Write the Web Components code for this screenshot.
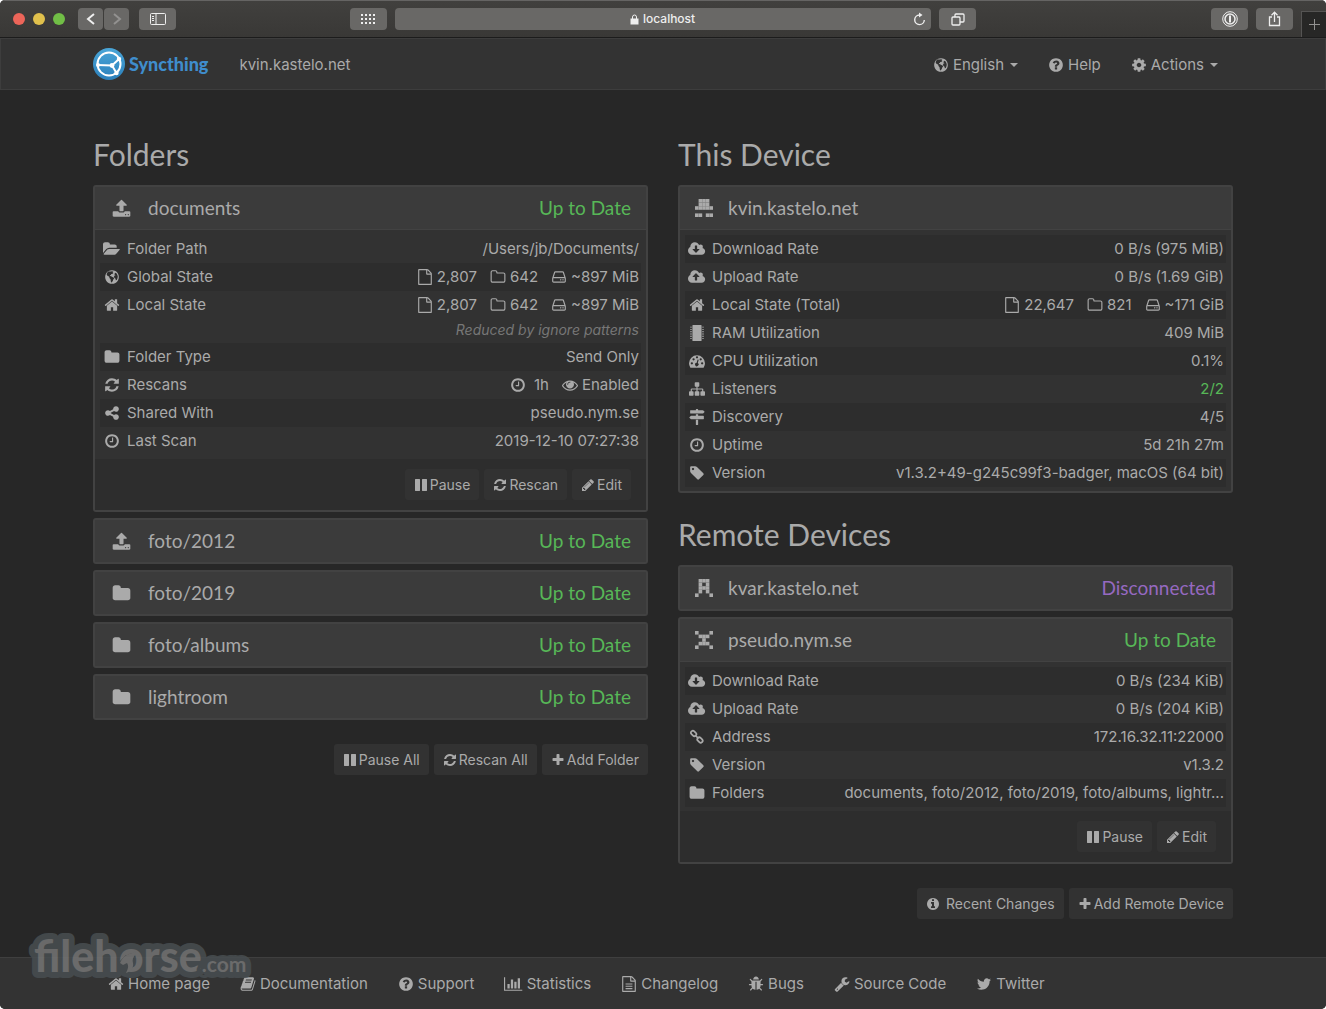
<!DOCTYPE html>
<html lang="en">
<head>
<meta charset="utf-8">
<title>kvin.kastelo.net | Syncthing</title>
<style>
html {
    background: #ffffff;
}

body {
    margin: 0;
    color: #aaaaaa;
    font: 15px/28px Inter, "Liberation Sans", sans-serif;
}
</style>
</head>
<body>
<st-window>
    <st-toolbar slot="chrome"></st-toolbar>
    <st-navbar slot="nav" device="kvin.kastelo.net"></st-navbar>

    <st-section heading="Folders" slot="left">
        <st-panel icon="upload" name="documents" status="Up to Date" open>
            <st-facts id="documents" stripe="even"></st-facts>
            <st-button slot="actions" icon="pause">Pause</st-button>
            <st-button slot="actions" icon="refresh">Rescan</st-button>
            <st-button slot="actions" icon="pencil">Edit</st-button>
        </st-panel>
        <st-panel icon="upload" name="foto/2012" status="Up to Date"></st-panel>
        <st-panel icon="folder" name="foto/2019" status="Up to Date"></st-panel>
        <st-panel icon="folder" name="foto/albums" status="Up to Date"></st-panel>
        <st-panel icon="folder" name="lightroom" status="Up to Date"></st-panel>
        <st-button slot="actions" icon="pause">Pause All</st-button>
        <st-button slot="actions" icon="refresh">Rescan All</st-button>
        <st-button slot="actions" icon="plus">Add Folder</st-button>
    </st-section>

    <st-section heading="This Device" slot="right">
        <st-panel identicon=".xxx. .xxx. xxxxx ..... xx.xx" name="kvin.kastelo.net" open>
            <st-facts id="this-device" stripe="odd"></st-facts>
        </st-panel>
    </st-section>
    <st-section heading="Remote Devices" slot="right">
        <st-panel identicon=".xxx. .x.x. .xxx. .x.x. x...x" name="kvar.kastelo.net" status="Disconnected"></st-panel>
        <st-panel identicon="x...x .xxx. ..x.. .xxx. x...x" name="pseudo.nym.se" status="Up to Date" open>
            <st-facts id="pseudo" stripe="odd"></st-facts>
            <st-button slot="actions" icon="pause">Pause</st-button>
            <st-button slot="actions" icon="pencil">Edit</st-button>
        </st-panel>
        <st-button slot="actions" icon="info" wide>Recent Changes</st-button>
        <st-button slot="actions" icon="plus">Add Remote Device</st-button>
    </st-section>

    <st-footer slot="footer"></st-footer>
    <st-watermark slot="footer"></st-watermark>
</st-window>

<script>
const DISC = "M1664 896q0 209-103 385.5t-279.5 279.5-385.5 103-385.5-103-279.5-279.5-103-385.5 103-385.5 279.5-279.5 385.5-103 385.5 103 279.5 279.5 103 385.5z";
const CLOUD = "M1920 1152q0 159-112.5 271.5t-271.5 112.5h-1088q-185 0-316.5-131.5t-131.5-316.5q0-132 71-241.5t187-163.5q-2-28-2-43 0-212 150-362t362-150q158 0 286.5 88t187.5 230q70-62 166-62 106 0 181 75t75 181q0 75-41 138 129 30 213 134.5t84 239.5z";
const FILE = "M1596 380q28 28 48 76t20 88v1152q0 40-28 68t-68 28h-1344q-40 0-68-28t-28-68v-1600q0-40 28-68t68-28h896q40 0 88 20t76 48zm-444-244v376h376q-10-29-22-41l-313-313q-12-12-41-22zm384 1528v-1024h-416q-40 0-68-28t-28-68v-416h-768v1536h1280z";

/**
 * Icon drawings: [view box width, path data]. Every view box is 1792 high.
 */
const ICONS = {
    "folder": [1792, "M1728 608v704q0 92-66 158t-158 66h-1216q-92 0-158-66t-66-158v-960q0-92 66-158t158-66h320q92 0 158 66t66 158v32h672q92 0 158 66t66 158z"],
    "folder-o": [1792, "M1600 1312v-704q0-40-28-68t-68-28h-704q-40 0-68-28t-28-68v-64q0-40-28-68t-68-28h-320q-40 0-68 28t-28 68v960q0 40 28 68t68 28h1216q40 0 68-28t28-68zm128-704v704q0 92-66 158t-158 66h-1216q-92 0-158-66t-66-158v-960q0-92 66-158t158-66h320q92 0 158 66t66 158v32h672q92 0 158 66t66 158z"],
    "folder-open": [1920, "M1879 952q0 31-31 66l-336 396q-43 51-120.5 86.5t-143.5 35.5h-1088q-34 0-60.5-13t-26.5-43q0-31 31-66l336-396q43-51 120.5-86.5t143.5-35.5h1088q34 0 60.5 13t26.5 43zm-343-344v160h-832q-94 0-197 47.5t-164 119.5l-337 396-5 6v-985q0-92 66-158t158-66h320q92 0 158 66t66 158v32h544q92 0 158 66t66 158z"],
    "file-o": [1792, FILE],
    "file-text": [1792, FILE + "M512 832h768v128h-768zM512 1088h768v128h-768zM512 1344h768v128h-768z"],
    "home": [1792, "M1472 992v480q0 26-19 45t-45 19h-384v-384h-256v384h-384q-26 0-45-19t-19-45v-480q0-1 .5-3t.5-3l575-474 575 474q1 2 1 6zm223-69l-62 74q-8 9-21 11h-3q-13 0-21-7l-692-577-692 577q-12 8-24 7-13-2-21-11l-62-74q-8-10-7-23.5t11-21.5l719-599q32-26 76-26t76 26l244 204v-195q0-14 9-23t23-9h192q14 0 23 9t9 23v408l219 182q10 8 11 21.5t-7 23.5z"],
    "clock": [1792, "M1024 544v448q0 14-9 23t-23 9h-320q-14 0-23-9t-9-23v-64q0-14 9-23t23-9h224v-352q0-14 9-23t23-9h64q14 0 23 9t9 23zm416 352q0-148-73-273t-198-198-273-73-273 73-198 198-73 273 73 273 198 198 273 73 273-73 198-198 73-273z" + DISC],
    "refresh": [1792, "M1639 1056q0 5-1 7-64 268-268 434.5t-478 166.5q-146 0-282.5-55t-243.5-157l-129 129q-19 19-45 19t-45-19-19-45v-448q0-26 19-45t45-19h448q26 0 45 19t19 45-19 45l-137 137q71 66 161 102t187 36q134 0 250-65t186-179q11-17 53-117 8-23 30-23h192q13 0 22.5 9.5t9.5 22.5zm25-800v448q0 26-19 45t-45 19h-448q-26 0-45-19t-19-45 19-45l138-138q-148-137-349-137-134 0-250 65t-186 179q-11 17-53 117-8 23-30 23h-199q-13 0-22.5-9.5t-9.5-22.5v-7q65-268 270-434.5t480-166.5q146 0 284 55.5t245 156.5l130-129q19-19 45-19t45 19 19 45z"],
    "share": [1792, "M1344 1024q133 0 226.5 93.5t93.5 226.5-93.5 226.5-226.5 93.5-226.5-93.5-93.5-226.5q0-12 2-34l-360-180q-92 86-218 86-133 0-226.5-93.5t-93.5-226.5 93.5-226.5 226.5-93.5q126 0 218 86l360-180q-2-22-2-34 0-133 93.5-226.5t226.5-93.5 226.5 93.5 93.5 226.5-93.5 226.5-226.5 93.5q-126 0-218-86l-360 180q2 22 2 34t-2 34l360 180q92-86 218-86z"],
    "eye": [1792, "M1664 960q-152-236-381-353 61 104 61 225 0 185-131.5 316.5t-316.5 131.5-316.5-131.5-131.5-316.5q0-121 61-225-229 117-381 353 133 205 333.5 326.5t434.5 121.5 434.5-121.5 333.5-326.5zm-720-384q0-20-14-34t-34-14q-125 0-214.5 89.5t-89.5 214.5q0 20 14 34t34 14 34-14 14-34q0-86 61-147t147-61q20 0 34-14t14-34zm848 384q0 34-20 69-140 230-376.5 368.5t-499.5 138.5-499.5-139-376.5-368q-20-35-20-69t20-69q140-229 376.5-368t499.5-139 499.5 139 376.5 368q20 35 20 69z"],
    "pause": [1792, "M1664 192v1408q0 26-19 45t-45 19h-512q-26 0-45-19t-19-45v-1408q0-26 19-45t45-19h512q26 0 45 19t19 45zm-896 0v1408q0 26-19 45t-45 19h-512q-26 0-45-19t-19-45v-1408q0-26 19-45t45-19h512q26 0 45 19t19 45z"],
    "pencil": [1792, "M491 1536l91-91-235-235-91 91v107h128v128h107zm523-928q0-22-22-22-10 0-17 7l-542 542q-7 7-7 17 0 22 22 22 10 0 17-7l542-542q7-7 7-17zm-54-192l416 416-832 832h-416v-416zm683 96q0 53-37 90l-166 166-416-416 166-165q36-38 90-38 53 0 91 38l235 234q37 39 37 91z"],
    "plus": [1792, "M1600 736v192q0 40-28 68t-68 28h-416v416q0 40-28 68t-68 28h-192q-40 0-68-28t-28-68v-416h-416q-40 0-68-28t-28-68v-192q0-40 28-68t68-28h416v-416q0-40 28-68t68-28h192q40 0 68 28t28 68v416h416q40 0 68 28t28 68z"],
    "info": [1792, "M1152 1376v-160q0-14-9-23t-23-9h-96v-512q0-14-9-23t-23-9h-320q-14 0-23 9t-9 23v160q0 14 9 23t23 9h96v320h-96q-14 0-23 9t-9 23v160q0 14 9 23t23 9h448q14 0 23-9t9-23zm-128-896v-160q0-14-9-23t-23-9h-192q-14 0-23 9t-9 23v160q0 14 9 23t23 9h192q14 0 23-9t9-23z" + DISC],
    "question": [1792, "M1024 1376v-192q0-14-9-23t-23-9h-192q-14 0-23 9t-9 23v192q0 14 9 23t23 9h192q14 0 23-9t9-23zm256-672q0-88-55.5-163t-138.5-116-170-41q-243 0-371 213-15 24 8 42l132 100q7 6 19 6 16 0 25-12 53-68 86-92 34-24 86-24 48 0 85.5 26t37.5 59q0 38-20 61t-68 45q-63 28-115.5 86.5t-52.5 125.5v36q0 14 9 23t23 9h192q14 0 23-9t9-23q0-19 21.5-49.5t54.5-49.5q32-18 49-28.5t46-35 44.5-48 28-60.5 12.5-81z" + DISC],
    "cog": [1792, "M1152 896q0-106-75-181t-181-75-181 75-75 181 75 181 181 75 181-75 75-181zm512-109v222q0 12-8 23t-20 13l-185 28q-19 54-39 91 35 50 107 138 10 12 10 25t-9 23q-27 37-99 108t-94 71q-12 0-26-9l-138-108q-44 23-91 38-16 136-29 186-7 28-36 28h-222q-14 0-24.5-8.5t-11.5-21.5l-28-184q-49-16-90-37l-141 107q-10 9-25 9-14 0-25-11-126-114-165-168-7-10-7-23 0-12 8-23 15-21 51-66.5t54-70.5q-27-50-41-99l-183-27q-13-2-21-12.5t-8-23.5v-222q0-12 8-23t19-13l186-28q14-46 39-92-40-57-107-138-10-12-10-24 0-10 9-23 26-36 98.5-107.5t94.5-71.5q13 0 26 10l138 107q44-23 91-38 16-136 29-186 7-28 36-28h222q14 0 24.5 8.5t11.5 21.5l28 184q49 16 90 37l142-107q9-9 24-9 13 0 25 10 129 119 165 170 7 8 7 22 0 12-8 23-15 21-51 66.5t-54 70.5q26 50 41 98l183 28q13 2 21 12.5t8 23.5z"],
    "tag": [1792, "M576 448q0-53-37.5-90.5t-90.5-37.5-90.5 37.5-37.5 90.5 37.5 90.5 90.5 37.5 90.5-37.5 37.5-90.5zm1067 576q0 53-37 90l-491 492q-39 37-91 37-53 0-90-37l-715-716q-38-37-64.5-101t-26.5-117v-416q0-52 38-90t90-38h416q53 0 117 26.5t102 64.5l715 714q37 39 37 91z"],
    "sitemap": [1792, "M1792 1248v320q0 40-28 68t-68 28h-320q-40 0-68-28t-28-68v-320q0-40 28-68t68-28h96v-192h-512v192h96q40 0 68 28t28 68v320q0 40-28 68t-68 28h-320q-40 0-68-28t-28-68v-320q0-40 28-68t68-28h96v-192h-512v192h96q40 0 68 28t28 68v320q0 40-28 68t-68 28h-320q-40 0-68-28t-28-68v-320q0-40 28-68t68-28h96v-192q0-52 38-90t90-38h512v-192h-96q-40 0-68-28t-28-68v-320q0-40 28-68t68-28h320q40 0 68 28t28 68v320q0 40-28 68t-68 28h-96v192h512q52 0 90 38t38 90v192h96q40 0 68 28t28 68z"],
    "cloud-down": [1920, CLOUD + "M1280 928q0-14-9-23t-23-9h-224v-352q0-13-9.5-22.5t-22.5-9.5h-192q-13 0-22.5 9.5t-9.5 22.5v352h-224q-13 0-22.5 9.5t-9.5 22.5q0 14 9 23l352 352q9 9 23 9t23-9l351-351q10-12 10-24z"],
    "cloud-up": [1920, CLOUD + "M1280 864q0 14-9 23t-23 9h-224v352q0 13-9.5 22.5t-22.5 9.5h-192q-13 0-22.5-9.5t-9.5-22.5v-352h-224q-13 0-22.5-9.5t-9.5-22.5q0-14 9-23l352-352q9-9 23-9t23 9l351 351q10 12 10 24z"],
    "twitter": [1792, "M1684 408q-67 98-162 167 1 14 1 42 0 130-38 259.5t-115.5 248.5-184.5 210.5-258 146-323 54.5q-271 0-496-145 35 4 78 4 225 0 401-138-105-2-188-64.5t-114-159.5q33 5 61 5 43 0 85-11-112-23-185.5-111.5t-73.5-205.5v-4q68 38 146 41-66-44-105-115t-39-154q0-88 44-163 121 149 294.5 238.5t371.5 99.5q-8-38-8-74 0-134 94.5-228.5t228.5-94.5q140 0 236 102 109-21 205-78-37 115-142 178 93-10 186-50z"],
    "wrench": [1792, "M448 1472q0-26-19-45t-45-19-45 19-19 45 19 45 45 19 45-19 19-45zm644-420l-682 682q-37 37-90 37-52 0-91-37l-106-108q-38-36-38-90 0-53 38-91l681-681q39 98 114.5 173.5t173.5 114.5zm634-435q0 39-23 106-47 134-164.5 217.5t-258.5 83.5q-185 0-316.5-131.5t-131.5-316.5 131.5-316.5 316.5-131.5q58 0 121.5 16.5t107.5 46.5q16 11 16 28t-16 28l-293 169v224l193 107q5-3 79-48.5t135.5-81 70.5-35.5q15 0 23.5 10t8.5 25z"],
    "chart": [2048, "M640 896v512H384V896zM1024 384v1024H768V384zM2048 1536v128H0V128h128v1408zM1408 640v768h-256V640zM1792 256v1152h-256V256z"],
    "book": [1792, "M1703 478q40 57 18 129l-275 906q-19 64-76.5 107.5t-122.5 43.5h-923q-77 0-148.5-53.5t-99.5-131.5q-24-67-2-127 0-4 3-27t4-37q1-8-3-21.5t-3-19.5q2-11 8-21t16.5-23.5 16.5-23.5q23-38 45-91.5t30-91.5q3-10 .5-30t-.5-28q3-11 17-28t17-23q21-36 42-92t25-90q1-9-2.5-32t.5-28q4-13 22-30.5t22-22.5q19-26 42.5-84.5t27.5-96.5q1-8-3-25.5t-2-26.5q2-8 9-18t18-23 17-21q8-12 16.5-30.5t15-35 16-36 19.5-32 26.5-23.5 36-11.5 47.5 5.5l-1 3q38-9 51-9h761q74 0 114 56t18 130l-274 906q-36 119-71.5 153.5t-128.5 34.5h-869q-27 0-38 15-11 16-1 43 24 70 144 70h923q29 0 56-15.5t35-41.5l300-987q7-22 5-57 38 15 59 43zm-1064 2q-4 13 2 22.5t20 9.5h608q13 0 25.5-9.5t16.5-22.5l21-64q4-13-2-22.5t-20-9.5h-608q-13 0-25.5 9.5t-16.5 22.5zm-83 256q-4 13 2 22.5t20 9.5h608q13 0 25.5-9.5t16.5-22.5l21-64q4-13-2-22.5t-20-9.5h-608q-13 0-25.5 9.5t-16.5 22.5z"],
    "bug": [1792, "M1696 960q0 26-19 45t-45 19h-224q0 171-67 290l208 209q19 19 19 45t-19 45q-18 19-45 19t-45-19l-198-197q-5 5-15 13t-42 28.5-65 36.5-82 29-97 13v-896h-128v896q-51 0-101.5-13.5t-87-33-66-39-43.5-32.5l-15-14-183 207q-20 21-48 21-24 0-43-16-19-18-20.5-44.5t15.5-46.5l202-227q-58-114-58-274h-224q-26 0-45-19t-19-45 19-45 45-19h224v-294l-173-173q-19-19-19-45t19-45 45-19 45 19l173 173h844l173-173q19-19 45-19t45 19 19 45-19 45l-173 173v294h224q26 0 45 19t19 45zm-480-576h-640q0-133 93.5-226.5t226.5-93.5 226.5 93.5 93.5 226.5z"],
    "signs": [1792, "M1745 297q10 10 10 23t-10 23l-141 141q-28 28-68 28h-1344q-26 0-45-19t-19-45v-256q0-26 19-45t45-19h576v-64q0-26 19-45t45-19h128q26 0 45 19t19 45v64h512q40 0 68 28zm-977 919h256v512q0 26-19 45t-45 19h-128q-26 0-45-19t-19-45v-512zm832-448q26 0 45 19t19 45v256q0 26-19 45t-45 19h-1344q-40 0-68-28l-141-141q-10-10-10-23t10-23l141-141q28-28 68-28h512v-192h256v192h576z"],
    "disk": [1792, "M1168 1216q0 33-23.5 56.5t-56.5 23.5-56.5-23.5-23.5-56.5 23.5-56.5 56.5-23.5 56.5 23.5 23.5 56.5zm256 0q0 33-23.5 56.5t-56.5 23.5-56.5-23.5-23.5-56.5 23.5-56.5 56.5-23.5 56.5 23.5 23.5 56.5zm112 160v-320q0-13-9.5-22.5t-22.5-9.5h-1216q-13 0-22.5 9.5t-9.5 22.5v320q0 13 9.5 22.5t22.5 9.5h1216q13 0 22.5-9.5t9.5-22.5zm-1230-480h1180l-157-482q-4-13-16-21.5t-26-8.5h-782q-14 0-26 8.5t-16 21.5zm1358 160v320q0 66-47 113t-113 47h-1216q-66 0-113-47t-47-113v-320q0-25 16-75l197-606q17-53 63-86t101-33h782q55 0 101 33t63 86l197 606q16 50 16 75z"],
    "upload": [1792, "M1344 1472q0-26-19-45t-45-19-45 19-19 45 19 45 45 19 45-19 19-45zm256 0q0-26-19-45t-45-19-45 19-19 45 19 45 45 19 45-19 19-45zm128-224v320q0 40-28 68t-68 28h-1472q-40 0-68-28t-28-68v-320q0-40 28-68t68-28h427q21 56 70.5 92t110.5 36h256q61 0 110.5-36t70.5-92h427q40 0 68 28t28 68zm-325-648q-17 40-59 40h-256v448q0 26-19 45t-45 19h-256q-26 0-45-19t-19-45v-448h-256q-42 0-59-40-17-39 14-69l448-448q18-19 45-19t45 19l448 448q31 30 14 69z"],
    "chip": [1792, "M448 0h896q64 0 64 64v1664q0 64-64 64h-896q-64 0-64-64v-1664q0-64 64-64zM128 192h192v96h-192zM128 448h192v96h-192zM128 704h192v96h-192zM128 960h192v96h-192zM128 1216h192v96h-192zM128 1472h192v96h-192zM1472 192h192v96h-192zM1472 448h192v96h-192zM1472 704h192v96h-192zM1472 960h192v96h-192zM1472 1216h192v96h-192zM1472 1472h192v96h-192z"],
    "gauge": [1792, "M0 1152a896 896 0 0 1 1792 0q0 261-141 483-19 29-54 29h-1402q-35 0-54-29-141-221-141-483zM192 1152a128 128 0 1 0 256 0 128 128 0 1 0-256 0zM384 704a128 128 0 1 0 256 0 128 128 0 1 0-256 0zM768 480a128 128 0 1 0 256 0 128 128 0 1 0-256 0zM1184 704a128 128 0 1 0 256 0 128 128 0 1 0-256 0zM1344 1152a128 128 0 1 0 256 0 128 128 0 1 0-256 0zM962 718l124 32-101 382a192 192 0 1 1-124-32z"],
    "globe": [1792, DISC + "M760 270l140-20 150 50-90 70 90 70-130 110-110 20-40 90-110 40 20 90 130 10 60 80 200 60 60 130-110 130-30 150-120 130-80 20-30-170-30-190-120-130-20-130-140-100-100-40-50-130 60-180 110-160zM1240 420l150 60 110 180 40 190-20 170-90 200-110 40-20-180-130-70-50-150 60-130 110-40-70-60-60-20z"],
    "link": [1792, ""]
};

/**
 * Returns a template element holding the given markup.
 *
 * @param {string} markup
 * @returns {HTMLTemplateElement}
 */
function template(markup) {
    const element = document.createElement("template");
    element.innerHTML = markup;
    return element;
}

/**
 * Base class: opens a shadow root and fills it from the class's template.
 */
class STElement extends HTMLElement {
    constructor() {
        super();
        this._shadowRoot = this.attachShadow({ mode: "open" });
        this._shadowRoot.appendChild(this.constructor.template.content.cloneNode(true));
    }

    /**
     * @param {string} id
     * @returns {HTMLElement}
     */
    part$(id) {
        return this._shadowRoot.getElementById(id);
    }
}

class STIcon extends STElement {
    static template = template(
`
<style>
:host {
    display: inline-flex;
    flex: none;
    justify-content: center;
    align-items: center;
}

svg {
    display: block;
    height: 1em;
    fill: currentColor;
    fill-rule: evenodd;
}
</style>
<svg id="drawing" aria-hidden="true"></svg>
`);

    connectedCallback() {
        const name = this.getAttribute("name");
        const [width, path] = ICONS[name];
        const drawing = this.part$("drawing");
        drawing.setAttribute("viewBox", `0 0 ${width} 1792`);
        if (name === "link") {
            drawing.innerHTML = `<g fill="none" stroke="currentColor" stroke-width="190"><rect x="-330" y="-220" width="660" height="440" rx="210" transform="translate(520 500) rotate(45)"/><rect x="-330" y="-220" width="660" height="440" rx="210" transform="translate(1230 1240) rotate(45)"/><path d="M700 700l350 350"/></g>`;
        } else {
            drawing.innerHTML = `<path d="${path}"/>`;
        }
    }
}

class STButton extends STElement {
    static template = template(
`
<style>
:host {
    display: block;
}

button {
    display: flex;
    align-items: center;
    gap: 2px;
    height: 31px;
    padding: 0 9px;
    border: 0;
    border-radius: 3px;
    background: #323232;
    color: inherit;
    font: 14px/20px Inter, "Liberation Sans", sans-serif;
    white-space: nowrap;
    cursor: pointer;
}

:host([wide]) button {
    gap: 6px;
}
</style>
<button type="button"><span id="icon"></span><span><slot></slot></span></button>
`);

    connectedCallback() {
        const icon = document.createElement("st-icon");
        icon.setAttribute("name", this.getAttribute("icon"));
        this.part$("icon").replaceWith(icon);
    }
}

class STWindow extends STElement {
    static template = template(
`
<style>
:host {
    display: flex;
    flex-direction: column;
    position: relative;
    min-height: 100vh;
    box-sizing: border-box;
    border-radius: 5px;
    background: #272727;
    overflow: hidden;
}

main {
    display: grid;
    grid-template-columns: 1fr 1fr;
    align-items: start;
    gap: 30px;
    width: 100%;
    max-width: 1140px;
    margin: 0 auto;
    padding: 23px 0 36px;
}

main > div {
    min-width: 0;
}

footer {
    margin-top: auto;
}
</style>
<slot name="chrome"></slot>
<slot name="nav"></slot>
<main>
    <div><slot name="left"></slot></div>
    <div><slot name="right"></slot></div>
</main>
<footer><slot name="footer"></slot></footer>
`);
}

class STToolbar extends STElement {
    static template = template(
`
<style>
:host {
    display: grid;
    grid-template-columns: 1fr minmax(0, 626px) 1fr;
    align-items: center;
    height: 38px;
    box-sizing: border-box;
    border-top: 1px solid #656463;
    border-bottom: 1px solid #1c1c1c;
    background: linear-gradient(#41403e, #393836);
    color: #eeeeee;
}

.group {
    display: flex;
    align-items: center;
    gap: 8px;
}

.lights {
    display: flex;
    gap: 8px;
    margin: 0 5px 0 13px;
}

.lights i {
    width: 12px;
    height: 12px;
    border-radius: 50%;
}

.pair {
    display: flex;
    gap: 1px;
    margin-right: 2px;
}

button,
.address {
    display: flex;
    justify-content: center;
    align-items: center;
    width: 37px;
    height: 22px;
    box-sizing: border-box;
    padding: 0;
    border: 0;
    border-radius: 4px;
    background: #696866;
    color: inherit;
}

.pair button {
    width: 25px;
}

.address {
    flex: 1;
    gap: 4px;
    padding: 0 5px 0 24px;
}

.address input {
    width: 54px;
    padding: 0;
    border: 0;
    background: none;
    color: inherit;
    font: 500 12px/16px Inter, "Liberation Sans", sans-serif;
}

.address .lock {
    margin-left: auto;
}

.address button {
    width: 14px;
    margin-left: auto;
    background: none;
}

.right {
    justify-content: flex-end;
    align-self: stretch;
}

.right .tab {
    align-self: flex-end;
    width: 25px;
    height: 26px;
    border: 1px solid #555453;
    border-width: 1px 0 0 1px;
    border-radius: 0;
    background: #272726;
}

svg {
    fill: none;
    stroke: currentColor;
}

.dim {
    stroke: #929190;
}
</style>
<div class="group">
    <div class="lights">
        <i style="background: #ec6559"></i>
        <i style="background: #e0c04c"></i>
        <i style="background: #71be46"></i>
    </div>
    <div class="pair">
        <button type="button" aria-label="Back"><svg width="12" height="14" stroke-width="2"><path d="M9 2L3 7l6 5"/></svg></button>
        <button type="button" aria-label="Forward"><svg class="dim" width="12" height="14" stroke-width="2"><path d="M3 2l6 5-6 5"/></svg></button>
    </div>
    <button type="button" aria-label="Show sidebar"><svg width="16" height="12"><rect x=".5" y=".5" width="15" height="11" rx="1"/><path d="M6 1v10M2 3.5h2M2 5.5h2M2 7.5h2"/></svg></button>
</div>
<div class="group">
    <button type="button" aria-label="Favourites"><svg width="15" height="11" stroke-width="2" stroke-dasharray="2 2"><path d="M0 1h15M0 5h15M0 9h15"/></svg></button>
    <div class="address">
        <svg class="lock" width="9" height="11"><rect x="1" y="5" width="7" height="5" fill="currentColor"/><path d="M2.500 5V3a2 2 0 0 1 4 0v2"/></svg>
        <input type="text" value="localhost" aria-label="Address">
        <button type="button" aria-label="Reload"><svg width="13" height="14" stroke-width="1.4"><path d="M8 3H6.500a4.800 4.800 0 1 0 4.800 5"/><path d="M6 .5L9.500 3 6 5.500z" fill="currentColor" stroke="none"/></svg></button>
    </div>
    <button type="button" aria-label="Show tabs"><svg width="14" height="13" stroke-width="1.3"><rect x="1" y="4" width="8" height="8" rx="1"/><path d="M4 4V2q0-1 1-1h7q1 0 1 1v6q0 1-1 1H9"/></svg></button>
</div>
<div class="group right">
    <button type="button" aria-label="Passwords"><svg width="16" height="16"><circle cx="8" cy="8" r="7.3"/><circle cx="8" cy="8" r="5" stroke-width="1.5"/><path d="M8 4.500v7" stroke-width="2"/></svg></button>
    <button type="button" aria-label="Share"><svg width="13" height="16" stroke-width="1.3"><path d="M4 6H1.500v8.500h10V6H9M6.500 11V1.500M3.500 4.200l3-3 3 3"/></svg></button>
    <button type="button" class="tab" aria-label="New tab"><svg class="dim" width="11" height="11"><path d="M5.500 0v11M0 5.500h11"/></svg></button>
</div>
`);
}

class STNavbar extends STElement {
    static template = template(
`
<style>
:host {
    display: block;
    border: 1px solid #3d3d3d;
    background: #333333;
}

nav {
    display: flex;
    align-items: center;
    max-width: 1140px;
    height: 50px;
    margin: 0 auto;
}

.brand {
    display: flex;
    align-items: center;
    gap: 4px;
    color: #3f8dcc;
    font: 900 18px/28px Lato, sans-serif;
    text-decoration: none;
}

#device {
    margin: 0 auto 0 31px;
    padding-top: 2px;
}

.menu {
    display: flex;
    align-items: center;
    gap: 4px;
    padding: 2px 15px 0;
    border: 0;
    background: none;
    color: inherit;
    font: inherit;
    text-decoration: none;
}

.menu st-icon {
    font-size: 16px;
}

.caret {
    margin-left: 2px;
    border: 4px solid transparent;
    border-top-color: currentColor;
    border-bottom: 0;
}
</style>
<nav>
    <a class="brand" href="#">
        <svg width="32" height="32" viewBox="0 0 32 32" aria-hidden="true">
            <linearGradient id="blue" x2="0" y2="1"><stop stop-color="#4aa6d8"/><stop offset="1" stop-color="#2c80bb"/></linearGradient>
            <circle cx="16" cy="16" r="16" fill="url(#blue)"/>
            <g fill="none" stroke="#ffffff" stroke-width="2">
                <circle cx="16" cy="16" r="11.5"/>
                <path d="M4.500 17l14.500.5 7-6.500M19 17.500l4.500 7.500"/>
            </g>
            <g fill="#ffffff"><circle cx="19" cy="17.500" r="2.400"/><circle cx="26" cy="11" r="2.200"/><circle cx="5" cy="17" r="2"/><circle cx="23.500" cy="25" r="2.200"/></g>
        </svg>
        <span>Syncthing</span>
    </a>
    <span id="device"></span>
    <button class="menu" type="button"><st-icon name="globe"></st-icon>English <i class="caret"></i></button>
    <a class="menu" href="#"><st-icon name="question"></st-icon>Help</a>
    <button class="menu" type="button"><st-icon name="cog"></st-icon>Actions <i class="caret"></i></button>
</nav>
`);

    connectedCallback() {
        this.part$("device").textContent = this.getAttribute("device");
    }
}

class STSection extends STElement {
    static template = template(
`
<style>
:host {
    display: block;
}

h2 {
    margin: 25px 0 15px;
    font: 400 30px/32px Lato, sans-serif;
}

.panels {
    display: flex;
    flex-direction: column;
    gap: 6px;
}

.actions {
    display: flex;
    justify-content: flex-end;
    gap: 5px;
    margin-top: 24px;
}

.actions[hidden] {
    display: none;
}
</style>
<h2 id="heading"></h2>
<div class="panels"><slot></slot></div>
<div class="actions" id="actions"><slot name="actions"></slot></div>
`);

    connectedCallback() {
        this.part$("heading").textContent = this.getAttribute("heading");
        this.part$("actions").hidden = !this.querySelector(":scope > [slot=actions]");
    }
}

class STPanel extends STElement {
    static template = template(
`
<style>
:host {
    display: block;
    border: 2px solid #424242;
    border-radius: 3px;
    background: #323232;
}

.heading {
    display: flex;
    align-items: center;
    width: 100%;
    height: 42px;
    padding: 0 15px;
    border: 0;
    background: #3b3b3b;
    color: inherit;
    font: 400 19px/24px Lato, sans-serif;
    text-align: left;
    cursor: pointer;
}

.heading st-icon {
    width: 22px;
    margin-right: 16px;
}

.heading svg {
    margin-right: 15px;
    fill: currentColor;
}

#status {
    margin-left: auto;
    color: #57b757;
}

#status.disconnected {
    color: #9669c0;
}

.body {
    padding: 5px 5px 4px;
    border-top: 1px solid #424242;
}

.actions {
    display: flex;
    justify-content: flex-end;
    gap: 5px;
    padding: 10px 15px;
    background: #2d2d2d;
}

[hidden] {
    display: none;
}
</style>
<button class="heading" type="button"><span id="icon"></span><span id="name"></span><span id="status"></span></button>
<div class="body" id="body"><slot></slot></div>
<div class="actions" id="actions"><slot name="actions"></slot></div>
`);

    connectedCallback() {
        const status = this.getAttribute("status") || "";
        this.part$("icon").outerHTML = this.hasAttribute("identicon")
            ? this.identicon()
            : `<st-icon name="${this.getAttribute("icon")}"></st-icon>`;
        this.part$("name").textContent = this.getAttribute("name");
        this.part$("status").textContent = status;
        this.part$("status").classList.toggle("disconnected", status === "Disconnected");
        this.part$("body").hidden = !this.hasAttribute("open");
        this.part$("actions").hidden = !this.querySelector("[slot=actions]");
    }

    /**
     * Draws the 5 by 5 device picture; each "x" is a filled cell.
     *
     * @returns {string}
     */
    identicon() {
        const cells = this.getAttribute("identicon").split(" ").flatMap((row, y) =>
            [...row].map((cell, x) => cell === "x" ? `<rect x="${x * 10}" y="${y * 10}" width="10" height="10"/>` : ""));
        return `<svg width="18" height="18" viewBox="0 0 50 50" aria-hidden="true">${cells.join("")}</svg>`;
    }
}

/**
 * @typedef {Object} Fact
 * @property {string} icon - Icon before the label.
 * @property {string} label - Row label.
 * @property {Array<string|string[]>} values - Plain texts, or [icon, text] pairs.
 * @property {string} [note] - Small remark under the values.
 * @property {boolean} [good] - Draw the value in green.
 */

class STFacts extends STElement {
    static template = template(
`
<style>
:host {
    display: block;
}

table {
    width: 100%;
    border-collapse: collapse;
    white-space: nowrap;
}

th,
td {
    height: 28px;
    padding: 0 2px;
    font-weight: 400;
    vertical-align: top;
}

th > span,
.values,
.value {
    display: flex;
    align-items: center;
}

th > span {
    gap: 5px;
}

th st-icon {
    width: 20px;
}

st-icon {
    font-size: 16px;
}

.values {
    justify-content: flex-end;
    gap: 13px;
}

.value {
    gap: 4px;
}

.good {
    color: #57b757;
}

.note {
    height: 24px;
    color: #777777;
    font: italic 14px/22px Inter, "Liberation Sans", sans-serif;
    text-align: right;
}

:host([stripe="odd"]) tr:nth-child(odd),
:host([stripe="even"]) tr:nth-child(even) {
    background: #2d2d2d;
}
</style>
<table><tbody id="rows"></tbody></table>
`);

    /**
     * @param {Fact[]} facts
     */
    set facts(facts) {
        this.part$("rows").innerHTML = facts.map(fact =>
`<tr>
    <th scope="row"><span><st-icon name="${fact.icon}"></st-icon>${fact.label}</span></th>
    <td>
        <div class="values ${fact.good ? "good" : ""}">${fact.values.map(value => this.value(value)).join("")}</div>
        ${fact.note ? `<div class="note">${fact.note}</div>` : ""}
    </td>
</tr>`).join("");
    }

    value(value) {
        if (typeof value === "string") {
            return `<span>${value}</span>`;
        }
        return `<span class="value"><st-icon name="${value[0]}"></st-icon>${value[1]}</span>`;
    }
}

class STFooter extends STElement {
    static template = template(
`
<style>
:host {
    display: block;
    border-top: 1px solid #3f3f3f;
    background: #333333;
}

nav {
    display: flex;
    align-items: center;
    gap: 30px;
    max-width: 1110px;
    height: 51px;
    margin: 0 auto;
}

a {
    display: flex;
    align-items: center;
    gap: 4px;
    color: inherit;
    text-decoration: none;
}

st-icon {
    font-size: 16px;
}
</style>
<nav>
    <a href="#"><st-icon name="home"></st-icon>Home page</a>
    <a href="#"><st-icon name="book"></st-icon>Documentation</a>
    <a href="#"><st-icon name="question"></st-icon>Support</a>
    <a href="#"><st-icon name="chart"></st-icon>Statistics</a>
    <a href="#"><st-icon name="file-text"></st-icon>Changelog</a>
    <a href="#"><st-icon name="bug"></st-icon>Bugs</a>
    <a href="#"><st-icon name="wrench"></st-icon>Source Code</a>
    <a href="#"><st-icon name="twitter"></st-icon>Twitter</a>
</nav>
`);
}

class STWatermark extends STElement {
    static template = template(
`
<style>
:host {
    display: block;
    position: absolute;
    bottom: 24px;
    left: 24px;
    pointer-events: none;
}

svg {
    display: block;
    opacity: 0.85;
}

text {
    fill: #757575;
    stroke: #484e51;
    stroke-width: 12px;
    stroke-linejoin: round;
    paint-order: stroke;
    font: 900 43px Lato, sans-serif;
}

.small {
    font: 700 21px Lato, sans-serif;
}
</style>
<svg width="240" height="56">
    <text x="10" y="43">filehorse<tspan class="small">.com</tspan></text>
    <!-- horse head inside the "o" -->
    <path fill="#484e51" d="M95 33l7-7 8 0 1 5-3 6-7 8-6-4z"/>
    <path fill="#757575" d="M96 34c2-5 6-9 13-10l2-2 1 3c-3 3-4 6-3 9 1 4-2 8-7 10 2-4 3-7 1-10l-4 2z"/>
</svg>
`);
}

customElements.define("st-icon", STIcon);
customElements.define("st-button", STButton);
customElements.define("st-window", STWindow);
customElements.define("st-toolbar", STToolbar);
customElements.define("st-navbar", STNavbar);
customElements.define("st-section", STSection);
customElements.define("st-panel", STPanel);
customElements.define("st-facts", STFacts);
customElements.define("st-footer", STFooter);
customElements.define("st-watermark", STWatermark);

document.getElementById("documents").facts = [
    { icon: "folder-open", label: "Folder Path", values: ["/Users/jb/Documents/"] },
    { icon: "globe", label: "Global State", values: [["file-o", "2,807"], ["folder-o", "642"], ["disk", "~897 MiB"]] },
    { icon: "home", label: "Local State", values: [["file-o", "2,807"], ["folder-o", "642"], ["disk", "~897 MiB"]], note: "Reduced by ignore patterns" },
    { icon: "folder", label: "Folder Type", values: ["Send Only"] },
    { icon: "refresh", label: "Rescans", values: [["clock", "&nbsp;1h"], ["eye", "Enabled"]] },
    { icon: "share", label: "Shared With", values: ["pseudo.nym.se"] },
    { icon: "clock", label: "Last Scan", values: ["2019-12-10 07:27:38"] }
];

document.getElementById("this-device").facts = [
    { icon: "cloud-down", label: "Download Rate", values: ["0 B/s (975 MiB)"] },
    { icon: "cloud-up", label: "Upload Rate", values: ["0 B/s (1.69 GiB)"] },
    { icon: "home", label: "Local State (Total)", values: [["file-o", "22,647"], ["folder-o", "821"], ["disk", "~171 GiB"]] },
    { icon: "chip", label: "RAM Utilization", values: ["409 MiB"] },
    { icon: "gauge", label: "CPU Utilization", values: ["0.1%"] },
    { icon: "sitemap", label: "Listeners", values: ["2/2"], good: true },
    { icon: "signs", label: "Discovery", values: ["4/5"] },
    { icon: "clock", label: "Uptime", values: ["5d 21h 27m"] },
    { icon: "tag", label: "Version", values: ["v1.3.2+49-g245c99f3-badger, macOS (64 bit)"] }
];

document.getElementById("pseudo").facts = [
    { icon: "cloud-down", label: "Download Rate", values: ["0 B/s (234 KiB)"] },
    { icon: "cloud-up", label: "Upload Rate", values: ["0 B/s (204 KiB)"] },
    { icon: "link", label: "Address", values: ["172.16.32.11:22000"] },
    { icon: "tag", label: "Version", values: ["v1.3.2"] },
    { icon: "folder", label: "Folders", values: ["documents, foto/2012, foto/2019, foto/albums, lightr..."] }
];
</script>
</body>
</html>
